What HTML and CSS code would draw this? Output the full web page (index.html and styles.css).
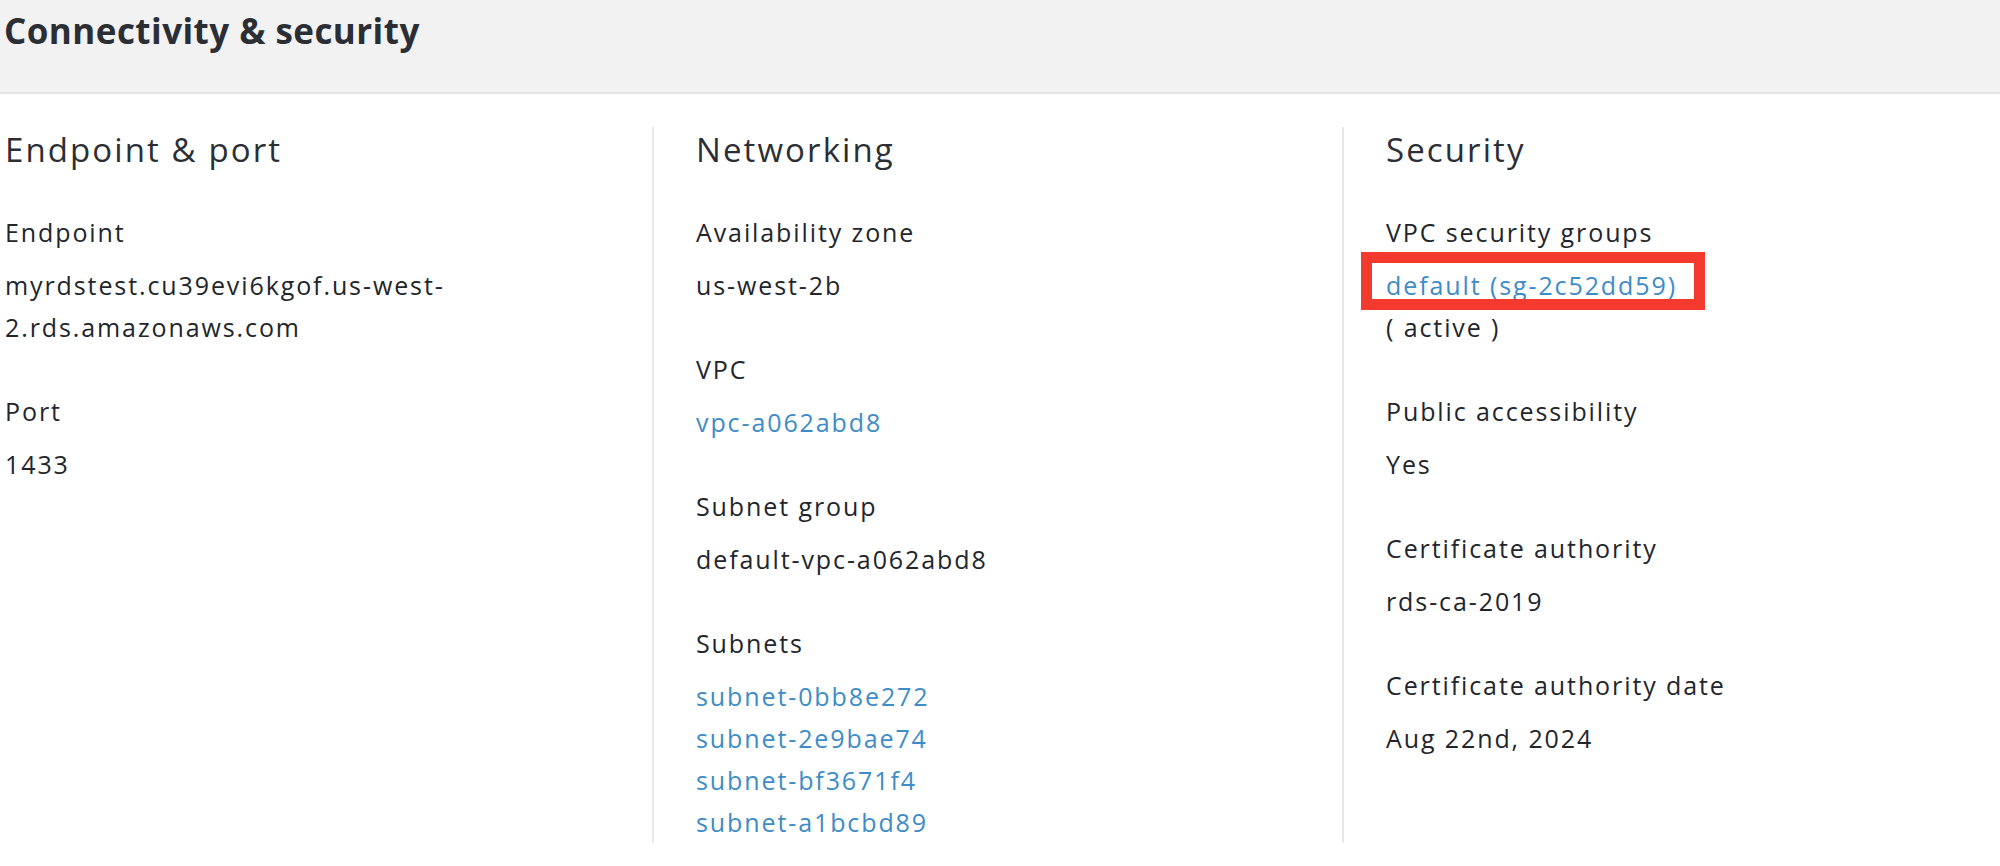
FILE: index.html
```html
<!DOCTYPE html>
<html lang="en">
<head>
<meta charset="utf-8">
<title>Connectivity &amp; security</title>
<link rel="stylesheet" href="styles.css">
</head>
<body>
<section class="panel">
  <header class="panel-header">
    <h2 class="panel-title">Connectivity &amp; security</h2>
  </header>
  <div class="columns">
    <div class="col">
      <h3 class="col-title">Endpoint &amp; port</h3>
      <div class="field">
        <div class="label">Endpoint</div>
        <div class="value">myrdstest.cu39evi6kgof.us-west-<br>2.rds.amazonaws.com</div>
      </div>
      <div class="field">
        <div class="label">Port</div>
        <div class="value">1433</div>
      </div>
    </div>
    <div class="col">
      <h3 class="col-title">Networking</h3>
      <div class="field">
        <div class="label">Availability zone</div>
        <div class="value">us-west-2b</div>
      </div>
      <div class="field">
        <div class="label">VPC</div>
        <div class="value"><a class="link" href="#">vpc-a062abd8</a></div>
      </div>
      <div class="field">
        <div class="label">Subnet group</div>
        <div class="value">default-vpc-a062abd8</div>
      </div>
      <div class="field">
        <div class="label">Subnets</div>
        <div class="value">
          <a class="link block" href="#">subnet-0bb8e272</a>
          <a class="link block" href="#">subnet-2e9bae74</a>
          <a class="link block" href="#">subnet-bf3671f4</a>
          <a class="link block" href="#">subnet-a1bcbd89</a>
        </div>
      </div>
    </div>
    <div class="col">
      <h3 class="col-title">Security</h3>
      <div class="field">
        <div class="label">VPC security groups</div>
        <div class="value">
          <span class="highlight"><a class="link" href="#">default (sg-2c52dd59)</a></span><br>( active )
        </div>
      </div>
      <div class="field">
        <div class="label">Public accessibility</div>
        <div class="value">Yes</div>
      </div>
      <div class="field">
        <div class="label">Certificate authority</div>
        <div class="value">rds-ca-2019</div>
      </div>
      <div class="field">
        <div class="label">Certificate authority date</div>
        <div class="value">Aug 22nd, 2024</div>
      </div>
    </div>
  </div>
</section>
</body>
</html>
```
FILE: styles.css
```css
html, body {
  margin: 0;
  padding: 0;
  background: #ffffff;
}

body {
  font-family: "Open Sans", "Noto Sans", sans-serif;
  color: #22262b;
}

.panel-header {
  background: #f2f2f2;
  border-bottom: 2px solid #e3e3e3;
  padding: 7px 0 37px 4px;
}

.panel-title {
  margin: 0;
  font-size: 35px;
  line-height: 48px;
  font-weight: 700;
  color: #2b2f35;
  letter-spacing: 0.45px;
}

.columns {
  display: grid;
  grid-template-columns: 652px 690px 1fr;
  margin-top: 33px;
}

.col {
  border-left: 2px solid #e9e9e9;
  padding: 3px 0 0 42px;
}

.col:first-child {
  border-left: none;
  padding-left: 5px;
}

.col-title {
  margin: 0 0 41px 0;
  font-size: 33px;
  line-height: 40px;
  font-weight: 400;
  letter-spacing: 2.1px;
  color: #2b2f35;
}

.field + .field {
  margin-top: 42px;
}

.label,
.value {
  font-size: 25px;
  line-height: 42px;
  letter-spacing: 1.9px;
}

.value {
  margin-top: 11px;
}

.link {
  color: #3d8cc7;
  text-decoration: none;
}

.link.block {
  display: block;
}

.highlight {
  position: relative;
  display: inline-block;
}

.highlight::after {
  content: "";
  position: absolute;
  left: -25px;
  top: -12px;
  width: 322px;
  height: 36px;
  border: 11px solid #f43a2f;
}
```
